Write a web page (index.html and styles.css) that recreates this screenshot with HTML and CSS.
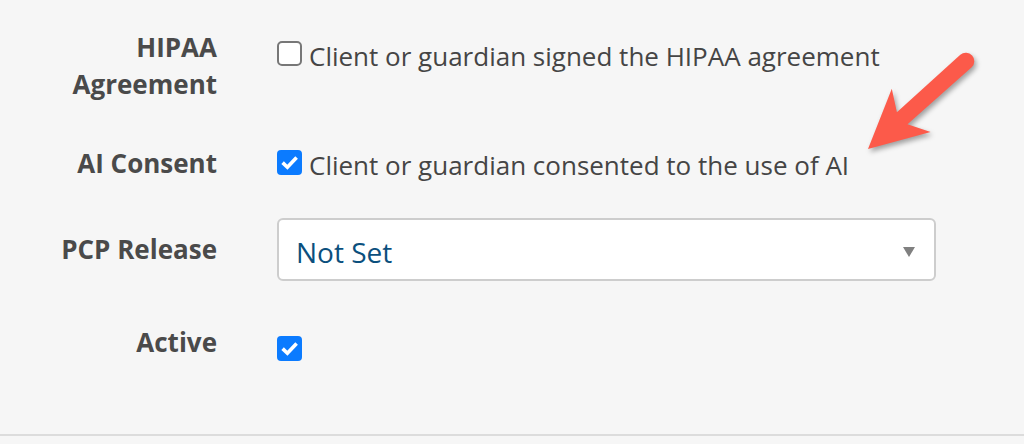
FILE: index.html
```html
<!DOCTYPE html>
<html lang="en">
<head>
<meta charset="utf-8">
<title>Client form</title>
<link rel="stylesheet" href="styles.css">
</head>
<body>
<div class="page">
  <form class="form">
    <div class="row row-hipaa">
      <div class="label">HIPAA<br>Agreement</div>
      <div class="control control-hipaa">
        <label class="check">
          <span class="box"></span>
          <span class="check-text">Client or guardian signed the HIPAA agreement</span>
        </label>
      </div>
    </div>
    <div class="row row-ai">
      <div class="label">AI Consent</div>
      <div class="control control-ai">
        <label class="check">
          <span class="box checked"><svg viewBox="0 0 25 25" width="25" height="25"><path d="M5.6 12.6 L10.4 17.2 L19.6 7.4" fill="none" stroke="#fff" stroke-width="3.6" stroke-linejoin="miter"/></svg></span>
          <span class="check-text">Client or guardian consented to the use of AI</span>
        </label>
      </div>
    </div>
    <div class="row row-pcp">
      <div class="label label-pcp">PCP Release</div>
      <div class="control">
        <div class="select">
          <span class="select-value">Not Set</span>
          <span class="caret"></span>
        </div>
      </div>
    </div>
    <div class="row row-active">
      <div class="label">Active</div>
      <div class="control control-active">
        <span class="box checked"><svg viewBox="0 0 25 25" width="25" height="25"><path d="M5.6 12.6 L10.4 17.2 L19.6 7.4" fill="none" stroke="#fff" stroke-width="3.6" stroke-linejoin="miter"/></svg></span>
      </div>
    </div>
  </form>
  <div class="divider"></div>
  <svg class="arrow" viewBox="850 40 140 125" width="140" height="125" aria-hidden="true">
    <path d="M868 149 L891.8 88.7 L896.9 112.3 L960.3 54.7 A8.5 8.5 0 0 1 971.7 67.3 L907.5 124.3 L930.6 131.9 Z" fill="#fc5a4a"/>
  </svg>
</div>
</body>
</html>
```
FILE: styles.css
```css
html, body {
  margin: 0;
  padding: 0;
  background: #f6f6f6;
}
body {
  font-family: "Open Sans", "Liberation Sans", sans-serif;
  width: 1024px;
  height: 444px;
  overflow: hidden;
}
.page {
  position: relative;
  height: 444px;
}
.form {
  padding-top: 29px;
  padding-bottom: 73px;
  margin: 0;
}
.row {
  display: grid;
  grid-template-columns: 217px 659px;
  column-gap: 60px;
  align-items: start;
}
.row-ai { margin-top: 42px; }
.row-pcp { margin-top: 34px; }
.row-active { margin-top: 43px; }
.label {
  text-align: right;
  font-weight: 700;
  font-size: 26px;
  line-height: 37px;
  color: #4a4a4a;
}
.label-pcp { padding-top: 13px; }
.control {
  font-size: 26px;
  line-height: 37px;
  color: #454545;
}
.control-hipaa { padding-top: 9px; }
.control-ai { padding-top: 2px; }
.control-active { padding-top: 12px; height: 25px; }
.check {
  display: flex;
  align-items: flex-start;
  gap: 7px;
}
.box {
  display: block;
  flex: none;
  width: 25px;
  height: 25px;
  box-sizing: border-box;
  border: 2px solid #777;
  border-radius: 5px;
  background: #fff;
  margin-top: 3px;
}
.box.checked {
  border: none;
  background: #0b7bff;
  border-radius: 4px;
}
.control-active .box { margin-top: 0; }
.box svg { display: block; }
.check-text { white-space: nowrap; }
.select {
  display: flex;
  align-items: flex-start;
  height: 63px;
  box-sizing: border-box;
  border: 2px solid #cdcdcd;
  border-radius: 6px;
  background: #fff;
  padding: 13px 19px 0 17px;
}
.select-value {
  font-size: 28px;
  line-height: normal;
  color: #0b4f7d;
}
.caret {
  margin-left: auto;
  margin-top: 14px;
  width: 0;
  height: 0;
  border-left: 6px solid transparent;
  border-right: 6px solid transparent;
  border-top: 10px solid #808080;
}
.divider {
  height: 2px;
  background: #dcdcdc;
}
.arrow {
  position: absolute;
  left: 850px;
  top: 40px;
  overflow: visible;
  filter: drop-shadow(2px 3px 2.5px rgba(0, 0, 0, 0.35));
}
```
